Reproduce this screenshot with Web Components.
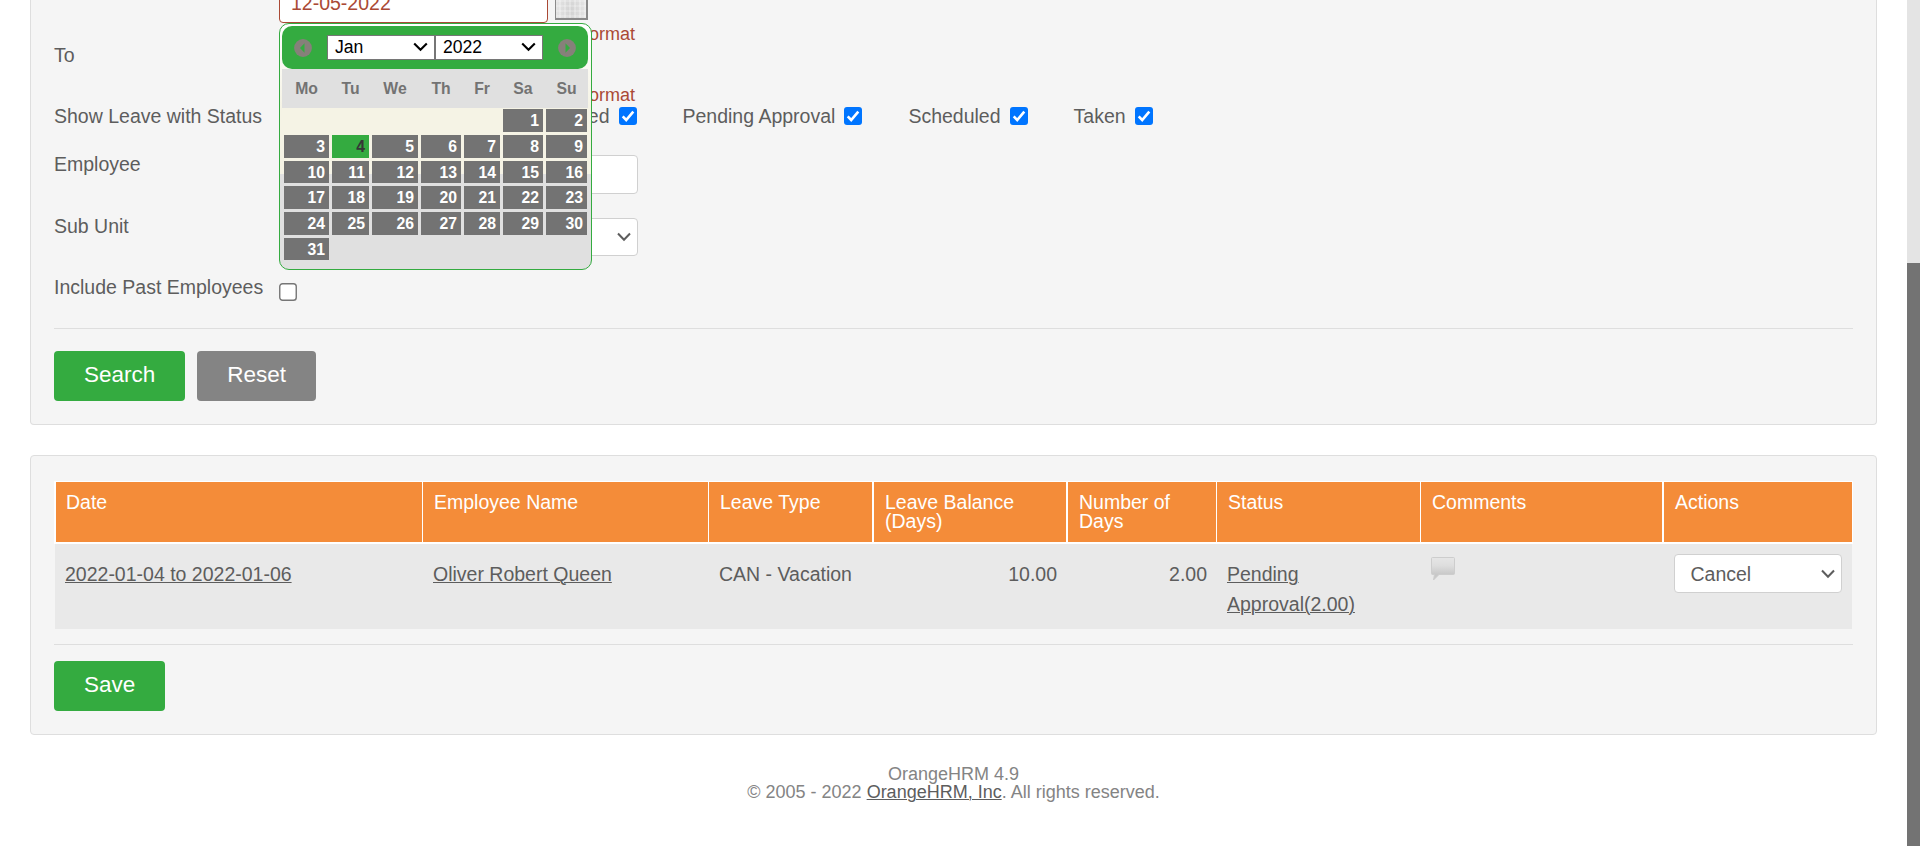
<!DOCTYPE html>
<html lang="en">
<head>
<meta charset="utf-8">
<title>OrangeHRM</title>
<style>
html,body{margin:0;padding:0;height:100%;overflow:hidden}
body{font-family:"Liberation Sans",Arial,sans-serif;font-size:19.5px;color:#5d5d5d;background:#fff}
</style>
</head>
<body>
<leave-page></leave-page>
<script>
const define=(name,html,init)=>customElements.define(name,class extends HTMLElement{
  connectedCallback(){
    if(this.shadowRoot)return;
    const root=this.attachShadow({mode:'open'});
    const t=document.createElement('template');
    t.innerHTML='<style>*{box-sizing:border-box}:host{box-sizing:border-box}</style>'+html;
    root.append(t.content.cloneNode(true));
    if(init)init(this,root);
  }
});

define('hrm-button',`<style>
:host{display:inline-flex;height:50px;padding:0 30px;border-radius:4px;background:#34ab40;color:#fff;font-size:22.5px;line-height:48px;white-space:nowrap}
:host([kind=reset]){background:#848484}
</style><slot></slot>`);

define('hrm-check',`<style>
:host{display:block;width:18px;height:18px;flex:none}
svg{display:block}
</style><svg width="18" height="18" viewBox="0 0 18 18"></svg>`,(el,root)=>{
  root.querySelector('svg').innerHTML=el.hasAttribute('checked')
    ?'<rect width="18" height="18" rx="3" fill="#0075ff"/><path d="M3.7 9.4 7.2 13 14.3 4.6" fill="none" stroke="#fff" stroke-width="2.6"/>'
    :'<rect x=".75" y=".75" width="16.5" height="16.5" rx="2.8" fill="#fff" stroke="#767676" stroke-width="1.4"/>';
});

define('hrm-field',`<style>
:host{display:flex;align-items:center;justify-content:space-between;border:1px solid #d0d0d0;border-radius:4px;background:#fff;height:39px;padding:0 6px 0 15.5px}
:host([invalid]){border-color:#aa4935;color:#aa4935;width:269px;padding:0 6px 2px 11px}
svg{display:none}
:host([select]) svg{display:block}
</style><slot></slot><svg width="14" height="10" viewBox="0 0 14 10"><path d="M1 1.5 7 7.8 13 1.5" fill="none" stroke="#5d5d5d" stroke-width="2"/></svg>`);

define('cal-select',`<style>
:host{display:flex;width:108px;height:25px;align-items:center;justify-content:space-between;background:#fff;border:1px solid #767676;color:#000;font-size:17.6px;padding:0 6px 2px 7px}
</style><slot></slot><svg width="15" height="10" viewBox="0 0 15 10"><path d="M1.2 1.5 7.5 7.8 13.8 1.5" fill="none" stroke="#000" stroke-width="2.1"/></svg>`);

define('cal-arrow',`<style>:host{display:block;width:18px;height:18px}:host([next]){transform:scaleX(-1)}svg{display:block}</style>
<svg width="18" height="18" viewBox="0 0 18 18"><circle cx="9" cy="9" r="8.9" fill="#86807a"/><path d="M6 9 10.5 4.3V13.7Z" fill="#34ab40"/></svg>`);

define('date-picker',`<style>
:host{display:block;width:313px;height:247px;border:1px solid #34ab40;border-radius:10px;padding:2px 3px 2px 2px;background:linear-gradient(#fff 0,#f5f3e5 84px,#f5f3e5 150px,#e0e0e0 150px);font-size:15.75px;font-weight:bold}
header{height:43px;border-radius:10px;background:#34ab40;display:flex;align-items:center;padding:0 12px;font-weight:normal}
.sel{display:flex;margin:0 auto}
.grid{display:grid;grid-template-columns:45px 37px 46px 40px 36px 40px 41px;column-gap:3px;padding:0 0 0 2px}
.head{height:39px;line-height:40px;background:#e0e0e0;color:#737373;text-align:center}
.days{grid-template-rows:23px 23px 22px 23px 23px 22px;row-gap:3px;padding-top:1px}
.days span{background:#737373;color:#fff;text-align:right;padding-right:4px;line-height:23px}
.days .now{background:#34ab40;color:#363636}
.days span:first-child{grid-column:6}
</style>
<header><cal-arrow></cal-arrow><div class="sel"><cal-select>Jan</cal-select><cal-select>2022</cal-select></div><cal-arrow next></cal-arrow></header>
<div class="grid head"></div><div class="grid days"></div>`,(el,root)=>{
  root.querySelector('.head').innerHTML=['Mo','Tu','We','Th','Fr','Sa','Su'].map(d=>`<b>${d}</b>`).join('');
  root.querySelector('.days').innerHTML=Array.from({length:31},(_,i)=>`<span${i===3?' class="now"':''}>${i+1}</span>`).join('');
});

define('calendar-button',`<style>
:host{display:block;width:33px;height:39px;background:repeating-linear-gradient(90deg,#fff0 0 3px,#fff4 3px 5px),repeating-linear-gradient(#fff0 0 3px,#fff3 3px 5px),radial-gradient(ellipse at 50% 80%,#d2d2d2,#ececec);border:1px solid #8a8a8a;border-right-width:2px;border-bottom-width:2px}
</style>`);

define('form-row',`<style>
:host{display:grid;grid-template-columns:225px 1fr;line-height:30px;white-space:nowrap}
</style><slot name="label"><span></span></slot><slot></slot>`);

define('search-panel',`<style>
:host{display:block;height:425px;background:#f5f5f5;border:1px solid #dedede;border-top:0;border-radius:0 0 4px 4px;padding:0 23px}
.err{color:#aa4935;font-size:18px;line-height:20px;text-align:right;width:356px;align-self:end}
.from .err{margin-bottom:-4px}
.from{height:40px}.to{height:61px}.st{height:48px}.emp{height:62px}.sub{height:61px}.inc{height:56px}
.stack{display:grid;grid-template-rows:23px 17px;position:relative}
.inputs{display:flex;gap:7px;height:23px;align-items:flex-end}
.inputs calendar-button{margin-bottom:3px}
date-picker{position:absolute;left:0;top:23px;z-index:2}
.checks{display:flex}
.item{display:flex;gap:9px;margin-right:46px}
.item hrm-check{margin-top:6px}
hrm-field.w{width:359px}
hr{border:0;border-top:1px solid #dedede;margin:0 0 22px}
.btns{display:flex;gap:12px}
</style>
<form-row class="from"><span slot="label"></span><div class="stack">
<div class="inputs"><hrm-field invalid>12-05-2022</hrm-field><calendar-button></calendar-button></div>
<div class="err">format</div><date-picker></date-picker></div></form-row>
<form-row class="to"><span slot="label">To</span><div class="err" style="margin-bottom:-4px">format</div></form-row>
<form-row class="st"><span slot="label">Show Leave with Status</span><div class="checks"></div></form-row>
<form-row class="emp"><span slot="label">Employee</span><hrm-field class="w" style="margin-top:6px"></hrm-field></form-row>
<form-row class="sub"><span slot="label">Sub Unit</span><hrm-field class="w" select style="margin-top:7px;height:38px"><span></span></hrm-field></form-row>
<form-row class="inc"><span slot="label">Include Past Employees</span><hrm-check style="margin-top:11px"></hrm-check></form-row>
<hr><div class="btns"><hrm-button>Search</hrm-button><hrm-button kind="reset">Reset</hrm-button></div>`,(el,root)=>{
  root.querySelector('.checks').innerHTML=['Cancelled','Pending Approval','Scheduled','Taken'].map((s,i)=>
   `<div class="item"${i?'':' style="width:357.5px;justify-content:flex-end"'}><span>${s}</span><hrm-check checked></hrm-check></div>`).join('');
});

define('comment-icon',`<style>:host{display:block;width:24px;height:24px;margin-top:-2px}svg{display:block}</style>
<svg width="24" height="24" viewBox="0 0 24 24"><defs><linearGradient id="g" x1="0" y1="0" x2="0" y2="1"><stop offset="0" stop-color="#e6e6e6"/><stop offset=".35" stop-color="#dedede"/><stop offset=".75" stop-color="#c8c8c8"/></linearGradient></defs>
<path d="M1.5.5h21q1 0 1 1v15q0 1-1 1H8L2.5 23 3.5 17.5h-2q-1 0-1-1v-15q0-1 1-1Z" fill="url(#g)" stroke="#cdcdcd"/></svg>`);

define('leave-table',`<style>
:host{display:block;width:1799px;color:#5d5d5d}
.r{display:grid}
.h{background:#fff;padding:1px 1px 2px 2px;height:63px;column-gap:1px;grid-template-columns:366px 285px 163px 193px 149px 203px 241px 189px;color:#fff;line-height:19px}
.h div{background:#f48c39;padding:11px 10px 0 11px}
.h div:first-child{padding-left:10px}
.h .w{margin-left:1px}
.b{background:#e9e9e9;height:85px;margin:0 1px;grid-template-columns:368px 286px 164px 194px 150px 204px 243px 188px;line-height:30px}
.b div{padding:15px 10px 0}
.n{text-align:right}
a{text-decoration:underline;text-underline-offset:1px;text-decoration-thickness:1px}
</style>
<div class="r h"><div>Date</div><div>Employee Name</div><div>Leave Type</div><div class="w">Leave Balance (Days)</div><div class="w">Number of Days</div><div>Status</div><div>Comments</div><div class="w">Actions</div></div>
<div class="r b"><div><a>2022-01-04 to 2022-01-06</a></div><div><a>Oliver Robert Queen</a></div><div>CAN - Vacation</div><div class="n">10.00</div><div class="n">2.00</div><div><a>Pending<br>Approval(2.00)</a></div><div><comment-icon></comment-icon></div><div style="padding-top:10px"><hrm-field select>Cancel</hrm-field></div></div>`);

define('results-panel',`<style>
:host{display:block;height:280px;margin-top:30px;background:#f5f5f5;border:1px solid #dedede;border-radius:4px;padding:25px 23px 0}
hr{border:0;border-top:1px solid #dedede;margin:15px 0 16px}
</style><leave-table></leave-table><hr><hrm-button>Save</hrm-button>`);

define('page-footer',`<style>
:host{display:block;margin-top:30px;text-align:center;font-size:18px;line-height:18px;color:#848484}
a{color:#5d5d5d;text-decoration:underline;text-underline-offset:1px;text-decoration-thickness:1px}
</style><div>OrangeHRM 4.9</div><div>© 2005 - 2022 <a>OrangeHRM, Inc</a>. All rights reserved.</div>`);

define('scroll-track',`<style>
:host{display:flex;flex-direction:column;justify-content:flex-end;background:#e4e4e4}
div{height:583px;background:#737373}
</style><div></div>`);

define('leave-page',`<style>
:host{display:grid;grid-template-columns:1fr 13px;height:846px}
main{padding:0 30px}
</style><main><search-panel></search-panel><results-panel></results-panel><page-footer></page-footer></main><scroll-track></scroll-track>`);
</script>
</body>
</html>
